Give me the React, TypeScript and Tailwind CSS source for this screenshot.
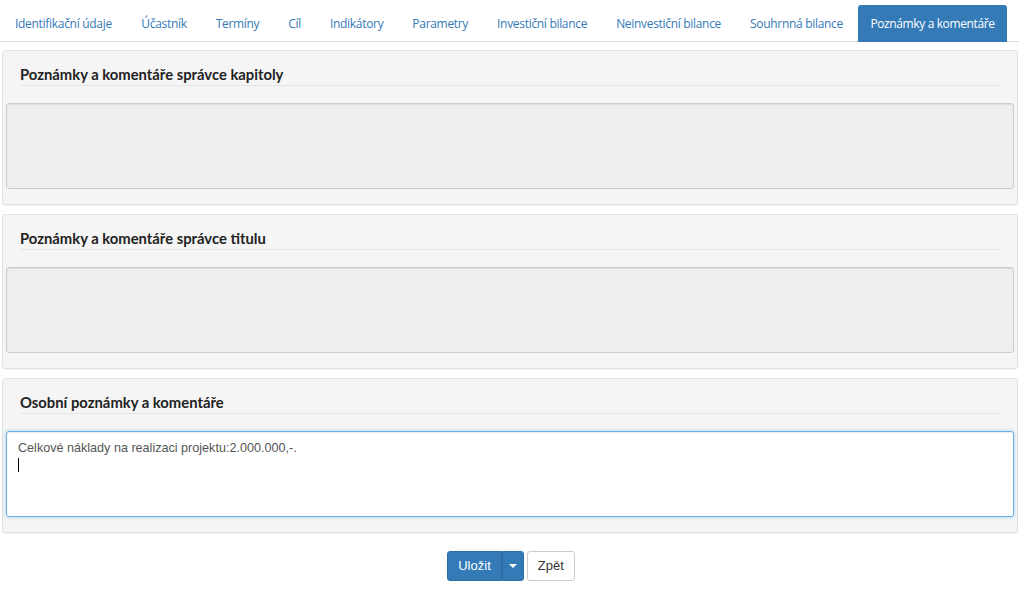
import React from "react";

const tabs = [
  "Identifikační údaje",
  "Účastník",
  "Termíny",
  "Cíl",
  "Indikátory",
  "Parametry",
  "Investiční bilance",
  "Neinvestiční bilance",
  "Souhrnná bilance",
  "Poznámky a komentáře",
];

function Panel({ title, children }: { title: string; children: React.ReactNode }) {
  return (
    <div className="ml-[2px] w-[1016px] rounded-[3px] border border-[#e3e3e3] bg-[#f5f5f5] px-[3px] pb-[15px] pt-[13px] shadow-[0_1px_1px_rgba(0,0,0,0.05)]">
      <div className="mx-[14px] border-b border-[#e5e5e5] pb-[1px]">
        <h3
          className="text-[14.8px] font-bold leading-[20px] text-[#222]"
          style={{ fontFamily: "Lato, 'Open Sans', sans-serif" }}
        >
          {title}
        </h3>
      </div>
      <div className="mt-[17px]">{children}</div>
    </div>
  );
}

export default function App() {
  return (
    <div className="h-[589px] w-[1024px] bg-white" style={{ fontFamily: "'Open Sans', sans-serif" }}>
      <div className="pt-[5px]">
        <div className="flex w-[1019px] border-b border-[#ddd]">
          {tabs.map((t, i) => {
            const active = i === tabs.length - 1;
            return (
              <div
                key={t}
                className={
                  active
                    ? "mb-[-1px] ml-[2px] flex h-[37px] items-center whitespace-nowrap rounded-t-[3px] bg-[#337ab7] px-[12px] text-[12px] tracking-[-0.38px] text-white"
                    : i === 0
                    ? "mb-[-1px] ml-[1px] flex h-[37px] items-center whitespace-nowrap px-[14px] text-[12px] tracking-[-0.3px] text-[#337ab7]"
                    : "mb-[-1px] ml-[2px] flex h-[37px] items-center whitespace-nowrap px-[13.5px] text-[12px] tracking-[-0.31px] text-[#337ab7]"
                }
              >
                {t}
              </div>
            );
          })}
        </div>
      </div>
      <div className="mt-[8px] flex flex-col gap-[9px]">
        <Panel title="Poznámky a komentáře správce kapitoly">
          <div className="h-[86px] rounded-[3px] border border-[#ccc] bg-[#eee] shadow-[inset_0_1px_1px_rgba(0,0,0,0.075)]" />
        </Panel>
        <Panel title="Poznámky a komentáře správce titulu">
          <div className="h-[86px] rounded-[3px] border border-[#ccc] bg-[#eee] shadow-[inset_0_1px_1px_rgba(0,0,0,0.075)]" />
        </Panel>
        <Panel title="Osobní poznámky a komentáře">
          <div className="h-[86px] rounded-[3px] border border-[#66afe9] bg-white px-[11px] pt-[8px] shadow-[inset_0_1px_1px_rgba(0,0,0,0.075),0_0_4px_rgba(102,175,233,0.5)]">
            <div
              className="text-[12.6px] leading-[17px] text-[#555]"
              style={{ fontFamily: "'Liberation Sans', Arial, sans-serif" }}
            >
              Celkové náklady na realizaci projektu:2.000.000,-.
            </div>
            <div className="mt-[1px] h-[14px] w-px bg-black" />
          </div>
        </Panel>
      </div>
      <div className="mt-[18px] flex justify-center gap-[3px] pr-[2px]" style={{ fontFamily: "'Liberation Sans', Arial, sans-serif" }}>
        <div className="flex h-[30px]">
          <div className="flex items-center rounded-l-[3px] border border-[#2e6da4] bg-[#337ab7] px-[10px] text-[13px] text-white">
            Uložit
          </div>
          <div className="flex w-[22px] items-center justify-center rounded-r-[3px] border border-[#2e6da4] bg-[#337ab7]">
            <div className="h-0 w-0 border-x-[4px] border-t-[4px] border-x-transparent border-t-white" />
          </div>
        </div>
        <div className="flex h-[30px] items-center rounded-[3px] border border-[#ccc] bg-white px-[10px] text-[13px] text-[#333]">
          Zpět
        </div>
      </div>
    </div>
  );
}
